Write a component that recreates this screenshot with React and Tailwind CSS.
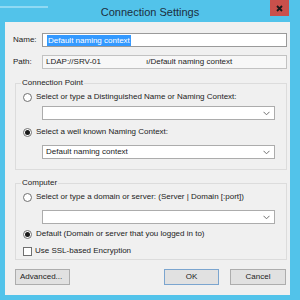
import React from 'react';

const Radio = ({ checked, label }) => (
  <div className="flex items-center h-[12px] ml-[7px]">
    <span className="w-[9px] h-[9px] rounded-full border border-[#707070] bg-white flex items-center justify-center shrink-0">
      {checked && <span className="w-[5px] h-[5px] rounded-full bg-[#1a1a1a]" />}
    </span>
    <span className="ml-[4px] whitespace-nowrap">{label}</span>
  </div>
);

const Combo = ({ value, className = '' }) => (
  <div className={`ml-[26px] w-[233px] h-[14px] bg-white border border-[#acacac] flex items-center justify-between pl-[3px] pr-[4px] ${className}`}>
    <span className="whitespace-nowrap">{value}</span>
    <svg width="7" height="5" viewBox="0 0 7 5" className="shrink-0">
      <polyline points="0.5,0.8 3.5,3.8 6.5,0.8" fill="none" stroke="#707070" strokeWidth="1" />
    </svg>
  </div>
);

const GroupBox = ({ title, className = '', children }) => (
  <fieldset className={`ml-[10px] w-[272px] border border-[#dcdcdc] p-0 m-0 ${className}`}>
    <legend className="ml-[5px] px-[1px] leading-[12px] h-[12px]">{title}</legend>
    {children}
  </fieldset>
);

export default function App() {
  return (
    <div
      className="w-[300px] h-[300px] bg-[#52c3ea] flex flex-col overflow-hidden text-[8px] text-[#222]"
      style={{ fontFamily: '"Liberation Sans", Arial, sans-serif' }}
    >
      {/* Title bar */}
      <div className="h-[22px] relative flex items-center justify-center shrink-0">
        <div className="absolute left-0 top-[6px] w-[48px] h-[2px] bg-[#8fd9f3]" />
        <span className="text-[11px] text-[#1c2e3d] mt-[3px]">Connection Settings</span>
        <div className="absolute right-[11px] top-0 w-[19px] h-[16px] bg-[#c9504b] flex items-center justify-center">
          <svg width="7" height="7" viewBox="0 0 7 7">
            <path d="M1 1 L6 6 M6 1 L1 6" stroke="#1a1a1a" strokeWidth="1.8" />
          </svg>
        </div>
      </div>

      {/* Dialog body */}
      <div className="ml-[5px] w-[285px] h-[273px] bg-[#f0f0f0] flex flex-col shrink-0">
        <div className="flex items-center mt-[11px] h-[14px]">
          <span className="ml-[8px] w-[29px]">Name:</span>
          <div className="w-[245px] h-[14px] bg-white border border-[#9a9a9a] flex items-center pl-[4px]">
            <span className="bg-[#3399ff] text-white leading-[11px] px-[1px]">Default naming context</span>
          </div>
        </div>
        <div className="flex items-center mt-[8px] h-[14px]">
          <span className="ml-[8px] w-[29px]">Path:</span>
          <div className="w-[245px] h-[14px] bg-[#f7f7f7] border border-[#c2c2c2] flex items-center pl-[3px]">
            <span className="whitespace-nowrap">LDAP://SRV-01</span>
            <span className="ml-[45px] whitespace-nowrap">ı/Default naming context</span>
          </div>
        </div>

        <GroupBox title="Connection Point" className="mt-[8px] pb-[10px]">
          <div className="mt-[2px]">
            <Radio label="Select or type a Distinguished Name or Naming Context:" />
          </div>
          <Combo value="" className="mt-[3px]" />
          <div className="mt-[6px]">
            <Radio checked label="Select a well known Naming Context:" />
          </div>
          <Combo value="Default naming context" className="mt-[7px]" />
        </GroupBox>

        <GroupBox title="Computer" className="mt-[7px] pb-[2px]">
          <div className="mt-[2px]">
            <Radio label="Select or type a domain or server: (Server | Domain [:port])" />
          </div>
          <Combo value="" className="mt-[7px]" />
          <div className="mt-[4px]">
            <Radio checked label="Default (Domain or server that you logged in to)" />
          </div>
          <div className="flex items-center h-[12px] ml-[7px] mt-[5px]">
            <span className="w-[9px] h-[9px] border border-[#707070] bg-white shrink-0" />
            <span className="ml-[3px] whitespace-nowrap">Use SSL-based Encryption</span>
          </div>
        </GroupBox>

        <div className="flex mt-[9px] h-[16px]">
          <button className="ml-[10px] w-[55px] h-[16px] bg-[#e1e1e1] border border-[#adadad] flex items-center pl-[4px]">
            Advanced...
          </button>
          <div className="flex-1" />
          <button className="w-[55px] h-[16px] bg-[#e1e1e1] border border-[#7ba5cf] flex items-center justify-center">
            OK
          </button>
          <button className="ml-[11px] mr-[4px] w-[56px] h-[16px] bg-[#e1e1e1] border border-[#adadad] flex items-center justify-center">
            Cancel
          </button>
        </div>
      </div>
    </div>
  );
}
